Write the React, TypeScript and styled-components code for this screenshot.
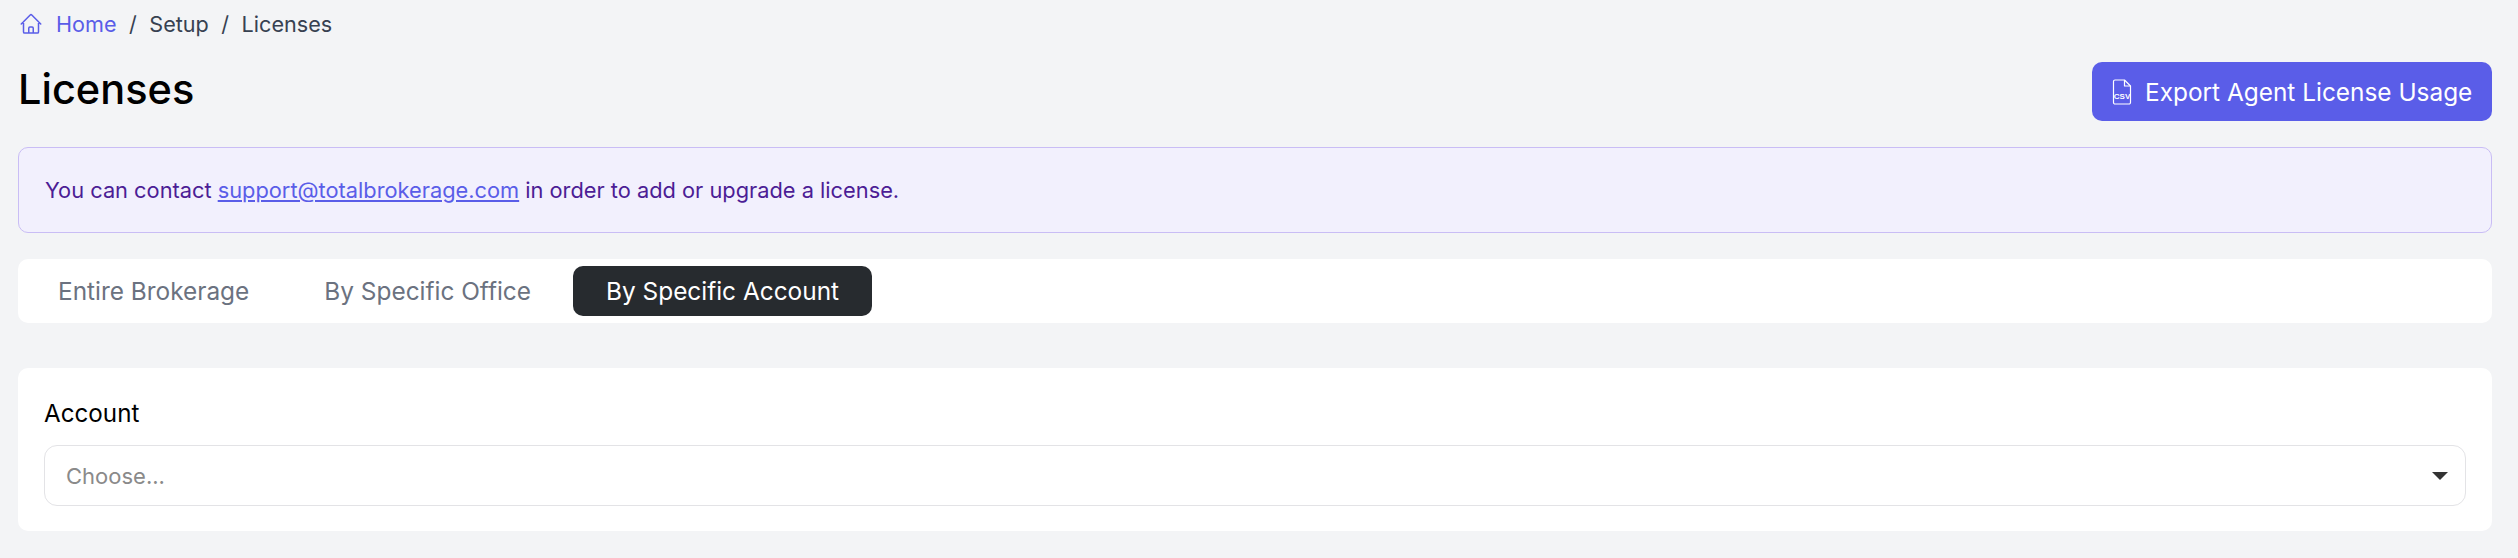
import styled, { createGlobalStyle } from "styled-components";

const GlobalStyle = createGlobalStyle`
  html, body {
    margin: 0;
    padding: 0;
    background: #f3f4f6;
  }

  body {
    font-family: Inter, "Liberation Sans", sans-serif;
  }

  * {
    box-sizing: border-box;
  }
`;

const Page = styled.div`
  height: 558px;
  padding: 10px 26px 0 18px;
  overflow: hidden;
`;

const Breadcrumb = styled.nav`
  display: flex;
  align-items: center;
  height: 28px;
  font-size: 21.6px;
  line-height: 28px;
  color: #374151;
`;

const HomeLink = styled.a`
  display: flex;
  align-items: center;
  gap: 13px;
  color: #5a5de8;
  text-decoration: none;
`;

const HomeIcon = styled.svg`
  width: 24px;
  height: 24px;
  margin-left: 1px;
  fill: none;
  stroke: #5a5de8;
  stroke-width: 1.5;
  stroke-linecap: round;
  stroke-linejoin: round;
`;

const Divider = styled.span`
  margin: 0 12.5px;
`;

const Header = styled.div`
  display: flex;
  align-items: center;
  justify-content: space-between;
  height: 59px;
  margin-top: 24px;
  margin-bottom: 26px;
`;

const Title = styled.h1`
  margin: 0 0 4px;
  font-size: 41.5px;
  font-weight: 500;
  line-height: 1;
  color: #000;
`;

const ExportButton = styled.button`
  display: flex;
  align-items: center;
  gap: 13px;
  width: 400px;
  height: 59px;
  padding: 0 20px;
  border: 0;
  border-radius: 10px;
  background: #5a5de8;
  color: #fff;
  font-family: inherit;
  font-size: 24.4px;
  white-space: nowrap;
`;

const CsvIcon = styled.svg`
  width: 20px;
  height: 26px;
  flex-shrink: 0;
  fill: none;
  stroke: #fff;
  stroke-width: 1.2;
  stroke-linejoin: round;
`;

const CsvLabel = styled.text`
  fill: #fff;
  stroke: none;
  font-family: "Liberation Sans", sans-serif;
  font-size: 8px;
  font-weight: 700;
`;

const Alert = styled.div`
  display: flex;
  align-items: center;
  height: 86px;
  margin-bottom: 26px;
  padding: 0 26px;
  border: 1px solid #c9bdf5;
  border-radius: 10px;
  background: #f2f0fd;
  color: #4c1d95;
  font-size: 21.8px;
`;

const AlertLink = styled.a`
  margin: 0 0.28em;
  color: #5a5de8;
  text-decoration: underline;
`;

const TabBar = styled.div`
  display: flex;
  gap: 9px;
  height: 64px;
  margin-bottom: 45px;
  padding: 7px;
  border-radius: 10px;
  background: #fff;
`;

const Tab = styled.div<{ $active?: boolean }>`
  display: flex;
  align-items: center;
  padding: 0 33px;
  border-radius: 10px;
  background: ${(props) => (props.$active ? "#272b2f" : "transparent")};
  color: ${(props) => (props.$active ? "#fff" : "#6b7280")};
  font-size: 24.4px;
`;

const Card = styled.section`
  height: 163px;
  padding: 30px 26px 0;
  border-radius: 10px;
  background: #fff;
`;

const FieldLabel = styled.div`
  height: 32px;
  margin-bottom: 15px;
  color: #000;
  font-size: 24.2px;
  line-height: 32px;
`;

const Select = styled.div`
  display: flex;
  align-items: center;
  justify-content: space-between;
  height: 61px;
  padding: 0 17px 0 21px;
  border: 1px solid #e3e3e6;
  border-radius: 13px;
  color: #8a8a8a;
  font-size: 22px;
`;

const Caret = styled.span`
  width: 0;
  height: 0;
  border-top: 8px solid #333;
  border-left: 8px solid transparent;
  border-right: 8px solid transparent;
`;

export default function App() {
  return (
    <>
      <GlobalStyle />
      <Page>
        <Breadcrumb>
          <HomeLink href="#">
            <HomeIcon viewBox="0 0 24 24">
              <path d="M2.25 12l8.954-8.955c.44-.439 1.152-.439 1.591 0L21.75 12M4.5 9.75v10.125c0 .621.504 1.125 1.125 1.125H9.75v-4.875c0-.621.504-1.125 1.125-1.125h2.25c.621 0 1.125.504 1.125 1.125V21h4.125c.621 0 1.125-.504 1.125-1.125V9.75M8.25 21h8.25" />
            </HomeIcon>
            Home
          </HomeLink>
          <Divider>/</Divider>
          <span>Setup</span>
          <Divider>/</Divider>
          <span>Licenses</span>
        </Breadcrumb>
        <Header>
          <Title>Licenses</Title>
          <ExportButton>
            <CsvIcon viewBox="0 0 20 26">
              <path d="M3 1h9.5L18.5 7v16.5a1.5 1.5 0 0 1-1.5 1.5H3a1.5 1.5 0 0 1-1.5-1.5v-21A1.5 1.5 0 0 1 3 1z" />
              <path d="M12.5 1v6h6" />
              <CsvLabel x="10" y="19.5" textAnchor="middle">CSV</CsvLabel>
            </CsvIcon>
            Export Agent License Usage
          </ExportButton>
        </Header>
        <Alert>
          You can contact
          <AlertLink href="#">support@totalbrokerage.com</AlertLink>
          in order to add or upgrade a license.
        </Alert>
        <TabBar>
          <Tab>Entire Brokerage</Tab>
          <Tab>By Specific Office</Tab>
          <Tab $active>By Specific Account</Tab>
        </TabBar>
        <Card>
          <FieldLabel>Account</FieldLabel>
          <Select>
            Choose...
            <Caret />
          </Select>
        </Card>
      </Page>
    </>
  );
}
